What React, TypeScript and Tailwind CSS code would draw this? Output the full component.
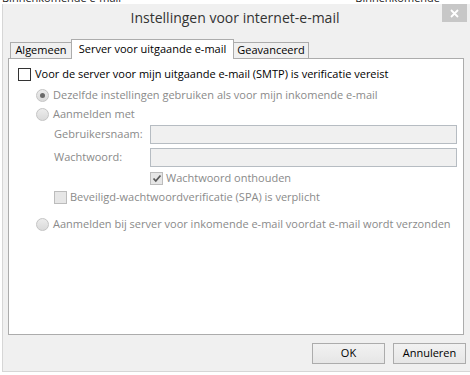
import React from "react";

const font = { fontFamily: '"Open Sans", "Noto Sans", sans-serif' };

function Radio({ checked }: { checked?: boolean }) {
  return (
    <span className="w-[13px] h-[13px] rounded-full border border-[#c4c4c4] bg-gradient-to-b from-[#ececec] to-[#dadada] flex items-center justify-center shrink-0">
      {checked && <span className="w-[5px] h-[5px] rounded-full bg-[#6a6a6a]" />}
    </span>
  );
}

function Check({ checked, enabled }: { checked?: boolean; enabled?: boolean }) {
  return (
    <span
      className={
        enabled
          ? "w-[13px] h-[13px] border border-[#333333] bg-white shrink-0 flex items-center justify-center"
          : "w-[13px] h-[13px] border border-[#bcbcbc] bg-[#e6e6e6] shrink-0 flex items-center justify-center"
      }
    >
      {checked && (
        <svg width="10" height="9" viewBox="0 0 10 9">
          <path d="M1.5 4.5 L3.8 7 L8.5 1.5" fill="none" stroke="#5a5a5a" strokeWidth="1.8" />
        </svg>
      )}
    </span>
  );
}

export default function App() {
  return (
    <div className="w-[470px] h-[375px] bg-white flex flex-col overflow-hidden text-[11px]" style={font}>
      {/* background window sliver */}
      <div className="h-[4px] overflow-hidden flex justify-between text-[#222] text-[11px] leading-[11px]">
        <span className="-mt-[8px] ml-[2px]">Binnenkomende e-mail</span>
        <span className="-mt-[8px] mr-[30px]">Binnenkomende</span>
      </div>
      <div className="h-[368px] ml-[2px] border-l border-b border-[#d6d6d6] bg-[#f0f0f0] flex flex-col">
        {/* title bar */}
        <div className="relative h-[35px] shrink-0">
          <div className="h-[26px] flex items-center justify-center text-[14px] text-[#333333] pr-[3px]">
            Instellingen voor internet-e-mail
          </div>
          <div className="absolute right-[3px] top-0 w-[25px] h-[18px] bg-[#c7c7c7] flex items-center justify-center">
            <svg width="9" height="9" viewBox="0 0 9 9">
              <path d="M1 1 L8 8 M8 1 L1 8" stroke="white" strokeWidth="1.8" />
            </svg>
          </div>
        </div>
        {/* tabs */}
        <div className="h-[19px] shrink-0 flex items-end pl-[7px] relative z-10 text-black">
          <div className="w-[62px] h-[16px] border border-b-0 border-[#acacac] flex items-center justify-center bg-[#f0f0f0]">
            Algemeen
          </div>
          <div className="w-[163px] h-[20px] -ml-px -mb-px border border-b-0 border-[#acacac] bg-white flex items-center justify-center pb-[1px]">
            Server voor uitgaande e-mail
          </div>
          <div className="w-[76px] h-[16px] -ml-px border border-b-0 border-[#acacac] flex items-center justify-center bg-[#f0f0f0]">
            Geavanceerd
          </div>
        </div>
        {/* panel */}
        <div className="ml-[5px] w-[456px] h-[277px] shrink-0 border border-[#acacac] bg-white pt-[6px] text-[#8a8a8a]">
          <div className="h-[19px] flex items-center pl-[9px] gap-[4px] text-black">
            <Check enabled />
            <span>Voor de server voor mijn uitgaande e-mail (SMTP) is verificatie vereist</span>
          </div>
          <div className="mt-[2px] h-[19px] flex items-center pl-[27px] gap-[4px]">
            <Radio checked />
            <span>Dezelfde instellingen gebruiken als voor mijn inkomende e-mail</span>
          </div>
          <div className="h-[19px] flex items-center pl-[27px] gap-[4px]">
            <Radio />
            <span>Aanmelden met</span>
          </div>
          <div className="mt-[1px] h-[19px] flex items-center pl-[45px]">
            <span className="w-[96px]">Gebruikersnaam:</span>
            <div className="w-[307px] h-[19px] border border-[#b6bcc2] bg-[#f0f0f0]" />
          </div>
          <div className="mt-[4px] h-[19px] flex items-center pl-[45px]">
            <span className="w-[96px]">Wachtwoord:</span>
            <div className="w-[307px] h-[19px] border border-[#b6bcc2] bg-[#f0f0f0]" />
          </div>
          <div className="mt-[1px] h-[20px] flex items-center pl-[141px] gap-[3px]">
            <Check checked />
            <span>Wachtwoord onthouden</span>
          </div>
          <div className="h-[19px] flex items-center pl-[45px] gap-[3px]">
            <Check />
            <span>Beveiligd-wachtwoordverificatie (SPA) is verplicht</span>
          </div>
          <div className="mt-[8px] h-[19px] flex items-center pl-[27px] gap-[4px]">
            <Radio />
            <span>Aanmelden bij server voor inkomende e-mail voordat e-mail wordt verzonden</span>
          </div>
        </div>
        {/* buttons */}
        <div className="mt-[8px] flex justify-end gap-[8px] pr-[4px] text-black">
          <button className="w-[73px] h-[21px] border border-[#acacac] bg-gradient-to-b from-[#f2f2f2] to-[#e6e6e6] flex items-center justify-center">
            OK
          </button>
          <button className="w-[73px] h-[21px] border border-[#acacac] bg-gradient-to-b from-[#f2f2f2] to-[#e6e6e6] flex items-center justify-center">
            Annuleren
          </button>
        </div>
      </div>
    </div>
  );
}
